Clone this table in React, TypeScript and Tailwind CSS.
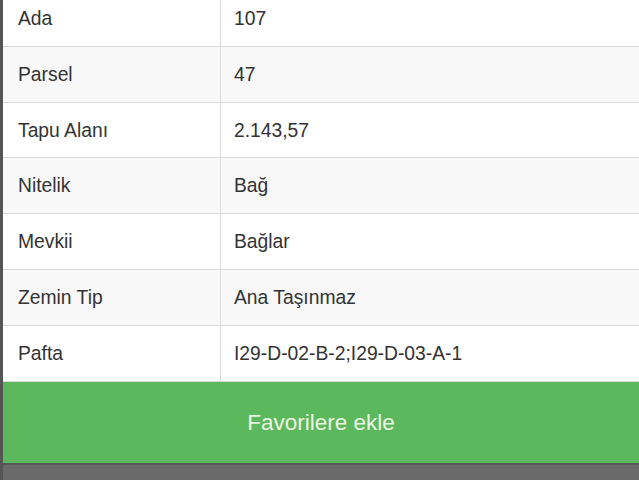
const rows: { label: string; value: string }[] = [
  { label: "Ada", value: "107" },
  { label: "Parsel", value: "47" },
  { label: "Tapu Alanı", value: "2.143,57" },
  { label: "Nitelik", value: "Bağ" },
  { label: "Mevkii", value: "Bağlar" },
  { label: "Zemin Tip", value: "Ana Taşınmaz" },
  { label: "Pafta", value: "I29-D-02-B-2;I29-D-03-A-1" },
];

export default function App() {
  return (
    <div
      className="w-[639px] h-[480px] overflow-hidden bg-white flex flex-col border-l-[3px] border-[#555]"
      style={{ fontFamily: '"Liberation Sans", Arial, sans-serif' }}
    >
      {/* Detail table */}
      <div className="-mt-[9px] flex flex-col">
        {rows.map((r, i) => (
          <div
            key={r.label}
            className={
              "flex h-[55.8px] shrink-0 border-b border-[#d9d9d9] text-[19.3px] text-[#333] " +
              (i % 2 === 1 ? "bg-[#f8f8f8]" : "bg-white")
            }
          >
            <div className="w-[218px] shrink-0 flex items-center pl-[15px] pt-[2px] border-r border-[#dcdcdc]">
              {r.label}
            </div>
            <div className="flex-1 flex items-center pl-[13px] pt-[2px]">{r.value}</div>
          </div>
        ))}
      </div>

      {/* Favourite button */}
      <button
        type="button"
        className="h-[81px] shrink-0 bg-[#5cb85c] text-[#eaf6e4] text-[22.5px] flex items-center justify-center pt-[2px]"
      >
        Favorilere ekle
      </button>

      <div className="flex-1 bg-[#6b6a6b] border-t-2 border-[#545754]" />
    </div>
  );
}
